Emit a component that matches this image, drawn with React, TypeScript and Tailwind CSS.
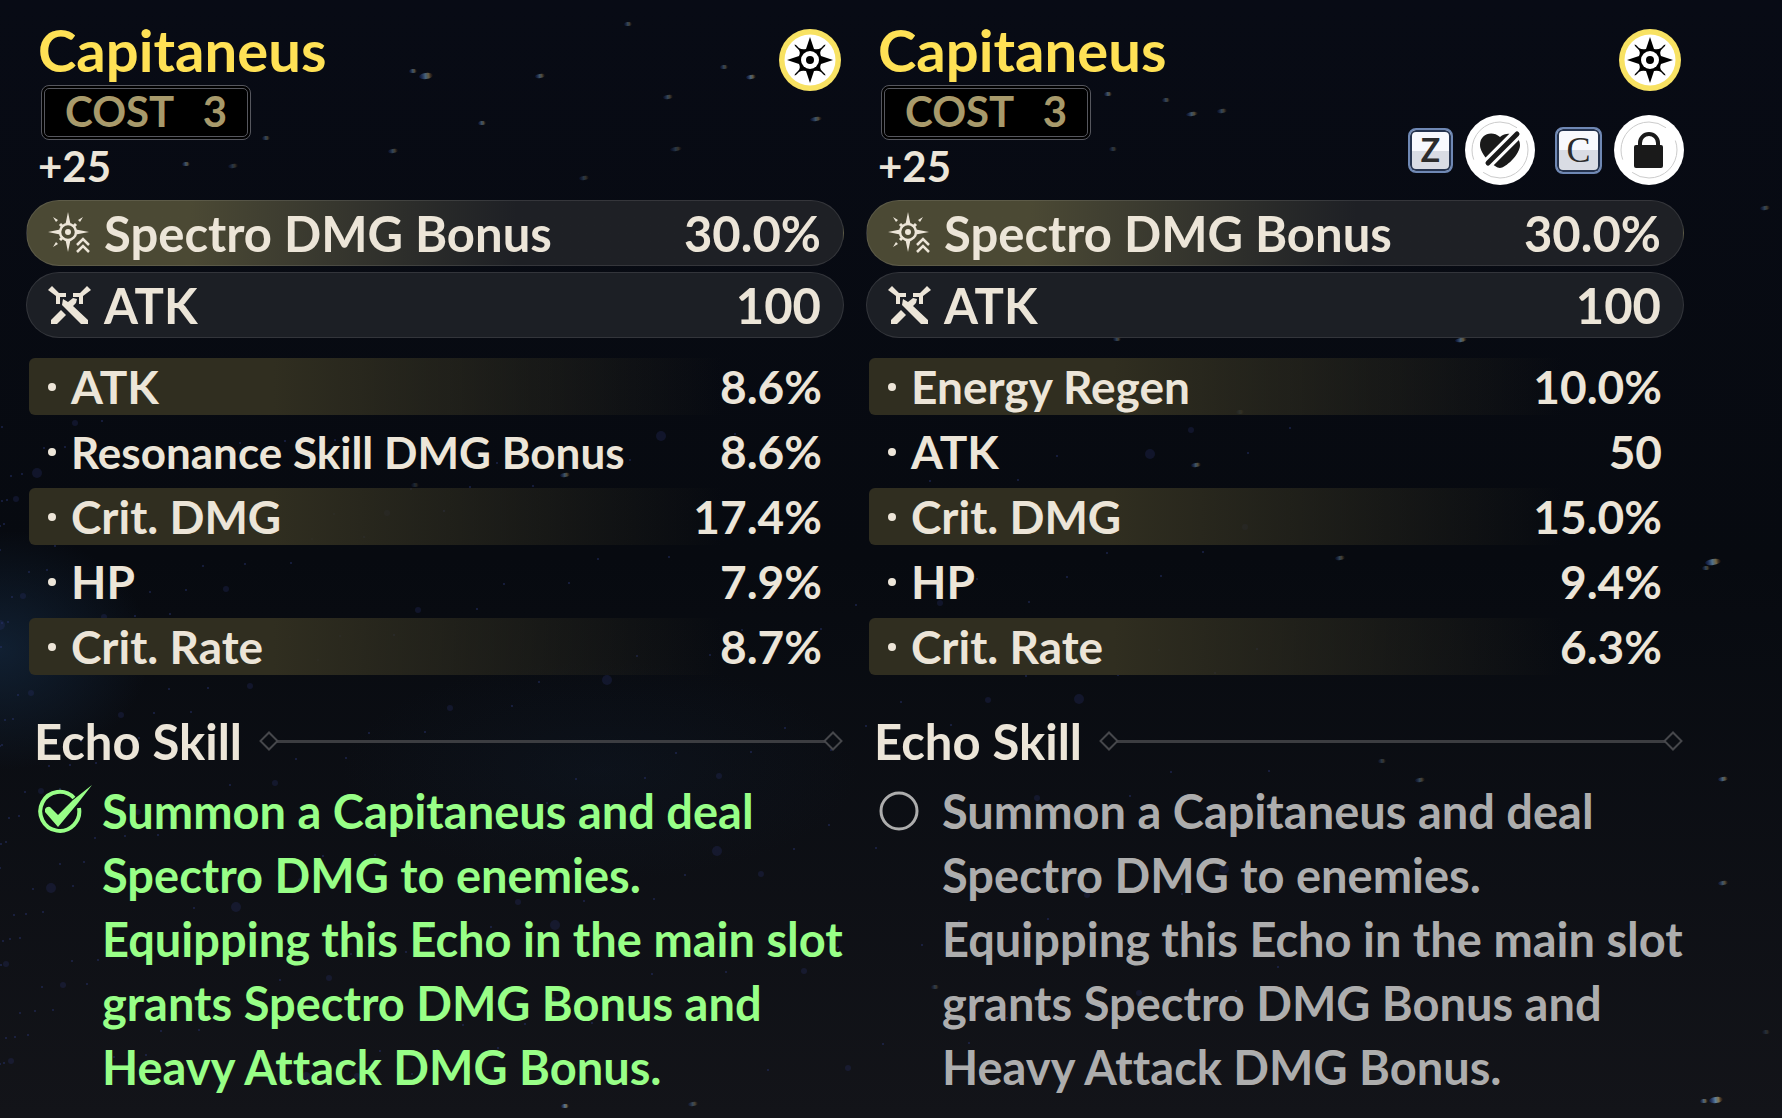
import { Fragment } from 'react';
import clsx from 'clsx';

type Stat = {
  label: string;
  value: string;
  compact?: boolean;
};

type Echo = {
  id: string;
  name: string;
  cost: number;
  level: string;
  subStats: Stat[];
  active: boolean;
  showActions: boolean;
};

const echoes: Echo[] = [
  {
    id: 'equipped',
    name: 'Capitaneus',
    cost: 3,
    level: '+25',
    subStats: [
      { label: 'ATK', value: '8.6%' },
      { label: 'Resonance Skill DMG Bonus', value: '8.6%', compact: true },
      { label: 'Crit. DMG', value: '17.4%' },
      { label: 'HP', value: '7.9%' },
      { label: 'Crit. Rate', value: '8.7%' },
    ],
    active: true,
    showActions: false,
  },
  {
    id: 'candidate',
    name: 'Capitaneus',
    cost: 3,
    level: '+25',
    subStats: [
      { label: 'Energy Regen', value: '10.0%' },
      { label: 'ATK', value: '50' },
      { label: 'Crit. DMG', value: '15.0%' },
      { label: 'HP', value: '9.4%' },
      { label: 'Crit. Rate', value: '6.3%' },
    ],
    active: false,
    showActions: true,
  },
];

const skillText = [
  'Summon a Capitaneus and deal Spectro DMG to enemies.',
  'Equipping this Echo in the main slot grants Spectro DMG Bonus and Heavy Attack DMG Bonus.',
];

// Bright streaks: x, y, half width, opacity
const streaks = [
  [413, 71, 4, 0.5], [426, 76, 7, 0.6], [540, 76, 5, 0.5], [628, 24, 4, 0.4], [668, 97, 5, 0.4],
  [751, 77, 5, 0.6], [724, 67, 4, 0.4], [816, 119, 6, 0.5], [482, 123, 4, 0.5], [676, 149, 6, 0.3],
  [584, 178, 5, 0.3], [266, 138, 4, 0.4], [186, 164, 4, 0.5], [233, 166, 5, 0.3], [393, 151, 5, 0.4],
  [448, 220, 5, 0.5], [653, 211, 5, 0.5], [298, 290, 4, 0.25], [317, 302, 4, 0.4], [1108, 94, 4, 0.5],
  [1166, 100, 4, 0.4], [1192, 114, 6, 0.5], [1222, 111, 5, 0.4], [1113, 149, 4, 0.3], [1084, 129, 4, 0.3],
  [1648, 275, 6, 0.4], [1385, 288, 6, 0.5], [1508, 305, 4, 0.4], [1461, 340, 6, 0.6], [1765, 208, 5, 0.4],
  [1595, 211, 5, 0.3], [1258, 306, 4, 0.3], [1117, 339, 4, 0.4], [565, 475, 5, 0.5], [415, 485, 4, 0.2],
  [1196, 465, 5, 0.5], [1240, 412, 4, 0.3], [1713, 562, 8, 0.7], [1706, 568, 4, 0.4], [1340, 558, 5, 0.4],
  [1723, 779, 5, 0.6], [1723, 883, 5, 0.5], [1382, 761, 4, 0.3], [1420, 780, 5, 0.4], [1716, 1100, 7, 0.8],
  [1704, 1101, 4, 0.6], [565, 1106, 4, 0.7], [693, 1104, 5, 0.4], [1766, 1032, 4, 0.2], [935, 987, 4, 0.3],
];

// Faint dust gathered around the lower left of the sky
const dust = Array.from({ length: 260 }, (_, i) => {
  const a = (i * 0.61803) % 1;
  const b = (i * 0.75488 + 0.31) % 1;
  return {
    x: Math.round(a * a * 1300),
    y: Math.round(420 + b * 660),
    r: i % 19 === 0 ? 5 : i % 7 === 0 ? 3 : 1,
  };
});

const Sky = () => (
  <svg className="absolute inset-0 h-full w-full" viewBox="0 0 1782 1118" preserveAspectRatio="xMidYMid slice" aria-hidden="true">
    <defs>
      <linearGradient id="streak" x1="0" x2="1" y1="0" y2="0">
        <stop offset="0" stopColor="#16309a" stopOpacity="0.4" />
        <stop offset="0.45" stopColor="#6d9cc0" />
        <stop offset="0.7" stopColor="#a08a55" />
        <stop offset="1" stopColor="#5a2a10" stopOpacity="0.2" />
      </linearGradient>
      <radialGradient id="haze">
        <stop offset="0" stopColor="#14283f" stopOpacity="0.7" />
        <stop offset="1" stopColor="#14283f" stopOpacity="0" />
      </radialGradient>
    </defs>
    <ellipse cx="0" cy="650" rx="150" ry="120" fill="url(#haze)" />
    <ellipse cx="600" cy="770" rx="260" ry="110" fill="url(#haze)" opacity="0.25" />
    {dust.map((d, i) => (
      <circle key={i} cx={d.x} cy={d.y} r={d.r} fill="#2a3470" opacity={d.r > 1 ? 0.28 : 0.6} />
    ))}
    {streaks.map(([x, y, w, o], i) => (
      <ellipse key={i} cx={x} cy={y} rx={w} ry={w > 6 ? 3 : 2} fill="url(#streak)" opacity={o} transform={`rotate(-8 ${x} ${y})`} />
    ))}
  </svg>
);

const SpectroEmblem = () => (
  <svg className="h-[62px] w-[62px]" viewBox="0 0 62 62" role="img" aria-label="Spectro">
    <circle cx="31" cy="31" r="31" fill="#f8e262" />
    <circle cx="31" cy="31" r="25.5" fill="#fff" />
    <path
      fill="#000"
      d="M31 8 L35 20 Q39 21 42 19 L45 16 L46.500 15.500 L46 17 L43 20 Q40 23 42 27 L54 31 L42 35 Q40 39 43 42 L46 45 L46.500 46.500 L45 46 L42 43 Q39 41 35 42 L31 54 L27 42 Q23 41 20 43 L17 46 L15.500 46.500 L16 45 L19 42 Q22 39 20 35 L8 31 L20 27 Q22 23 19 20 L16 17 L15.500 15.500 L17 16 L20 19 Q23 21 27 20 Z"
    />
    <circle cx="31" cy="31" r="9" fill="#fff" />
    <circle cx="31" cy="31" r="4" fill="#000" />
  </svg>
);

const SpectroBonusIcon = () => (
  <svg className="h-11 w-11 shrink-0" viewBox="0 0 44 44" aria-hidden="true">
    <g fill="#ece5d8">
      <path d="M20 1 L22.500 13 L17.500 13 Z M20 41 L22.500 29 L17.500 29 Z M0 21 L12 18.500 L12 23.500 Z M41 21 L28 18.500 L28 23.500 Z" />
      <path d="M5 6 L10 9 L8 11 Z M35 6 L30 9 L32 11 Z M5 36 L10 33 L8 31 Z" />
      <circle cx="20" cy="21" r="3" />
    </g>
    <circle cx="20" cy="21" r="8" fill="none" stroke="#ece5d8" strokeWidth="2.500" />
    <path d="M12 13 L15 16 M28 13 L25 16 M12 29 L15 26" stroke="#ece5d8" strokeWidth="3" />
    <path d="M29 34 L35 28 L41 34 M29 41 L35 35 L41 41" fill="none" stroke="#4b4934" strokeWidth="5" />
    <path d="M29 34 L35 28 L41 34 M29 41 L35 35 L41 41" fill="none" stroke="#ece5d8" strokeWidth="2.500" />
  </svg>
);

const SwordsIcon = () => (
  <svg className="h-11 w-11 shrink-0" viewBox="0 0 44 44" aria-hidden="true">
    <g fill="#ece5d8">
      <path d="M4 3 L11 10 L18 10 L18 14 L12 14 L12 21 L8 21 L8 13 L0 7 Z" />
      <path d="M39 3 L32 10 L25 10 L25 14 L31 14 L31 21 L35 21 L35 13 L43 7 Z" />
      <path d="M15 16 L20 19 L25 15 L29 16 L28 20 L25 23 L40 37 L40 41 L33 41 L14 22 Z" />
      <path d="M13 27 L18 32 L9 41 L3 41 L3 37 Z" />
    </g>
  </svg>
);

const HeartSlashIcon = () => (
  <svg className="h-[70px] w-[70px]" viewBox="0 0 70 70" aria-hidden="true">
    <circle cx="35" cy="35" r="28" fill="none" stroke="#ccc" strokeWidth="1" strokeDasharray="72 16" strokeDashoffset="10" />
    <path
      d="M35 53 C30 53 15 40 15 30 C15 19 27 15 35 22 C43 15 55 20 55 30 C55 40 40 53 35 53 Z"
      fill="#1a1a1a"
    />
    <path d="M22 49 L52 19" stroke="#fff" strokeWidth="11" strokeLinecap="round" />
    <path d="M23 48 L52 19" stroke="#1a1a1a" strokeWidth="5" strokeLinecap="round" />
  </svg>
);

const LockIcon = () => (
  <svg className="h-[70px] w-[70px]" viewBox="0 0 70 70" aria-hidden="true">
    <circle cx="35" cy="35" r="28" fill="none" stroke="#ccc" strokeWidth="1" strokeDasharray="72 16" strokeDashoffset="10" />
    <path d="M26 31 V28 A9 9 0 0 1 44 28 V31" fill="none" stroke="#1a1a1a" strokeWidth="4" />
    <rect x="20" y="30" width="29" height="23" rx="2" fill="#1a1a1a" />
  </svg>
);

const KeyCap = ({ children, className }: { children: string; className: string }) => (
  <kbd
    className={clsx(
      'flex items-center justify-center rounded-lg border-2 border-[#6f88b4] bg-linear-to-b from-[#f8f9fd] from-50% to-[#d9dce4] to-50% leading-none text-[#2c2c2c] ring-2 ring-[#26344f] ring-inset',
      className,
    )}
  >
    {children}
  </kbd>
);

const Actions = () => (
  <div className="flex items-center gap-5">
    <button type="button" aria-label="Discard mark" className="flex cursor-pointer items-center gap-3">
      <KeyCap className="h-[45px] w-[45px] font-['Lato'] text-[32px] font-bold">Z</KeyCap>
      <span className="rounded-full bg-white">
        <HeartSlashIcon />
      </span>
    </button>
    <button type="button" aria-label="Lock" className="flex cursor-pointer items-center gap-3">
      <KeyCap className="h-[47px] w-[47px] font-['Liberation_Serif'] text-[36px] font-normal">C</KeyCap>
      <span className="rounded-full bg-white">
        <LockIcon />
      </span>
    </button>
  </div>
);

const Divider = () => (
  <div className="flex grow items-center" aria-hidden="true">
    <span className="m-1 h-[14px] w-[14px] rotate-45 border-2 border-[#46474b]" />
    <span className="-mx-1 h-[3px] grow bg-[#3c3d41]" />
    <span className="m-1 h-[14px] w-[14px] rotate-45 border-2 border-[#46474b]" />
  </div>
);

const SkillMark = ({ active }: { active: boolean }) =>
  active ? (
    <svg className="h-[52px] w-[56px]" viewBox="0 0 56 52" aria-hidden="true">
      <path d="M36 13 A19.500 19.500 0 1 0 41 23" fill="none" stroke="#98ff87" strokeWidth="4" />
      <path d="M7 24 Q9 21 12 22 L20 30 L35 15 L54 0 L40 18 L20 42 L7 27 Z" fill="#98ff87" />
    </svg>
  ) : (
    <svg className="h-[52px] w-[56px]" viewBox="0 0 56 52" aria-hidden="true">
      <circle cx="21" cy="26" r="18" fill="none" stroke="#adadad" strokeWidth="3" />
    </svg>
  );

const EchoCard = ({ echo }: { echo: Echo }) => (
  <article>
    <header className="flex justify-between pt-5">
      <div className="pl-3">
        <h2 className="text-[58px] leading-[60px] font-bold text-[#ffe155]">{echo.name}</h2>
        <div className="mt-[5px] ml-[3px] flex h-[55px] w-[210px] items-center justify-between rounded-lg border-4 border-double border-[#56575e] bg-black pr-[20px] pb-1 pl-5 text-[42px] leading-none font-bold text-[#a89a6b]">
          <span>COST</span>
          <span>{echo.cost}</span>
        </div>
        <p className="text-[42px] leading-[52px] font-bold">{echo.level}</p>
      </div>
      <div className="flex flex-col items-end gap-6 pt-[9px]">
        <div className="mr-[3px]">
          <SpectroEmblem />
        </div>
        {echo.showActions && <Actions />}
      </div>
    </header>

    <dl className="mt-[8px] flex flex-col gap-[6px] text-[49px] leading-none font-bold">
      <div className="flex h-[66px] items-center rounded-full border border-white/10 bg-linear-to-r from-[#4b4934] from-20% to-[#1e2025] to-60% pr-[22px] pl-[21px]">
        <SpectroBonusIcon />
        <dt className="ml-3">Spectro DMG Bonus</dt>
        <dd className="ml-auto">30.0%</dd>
      </div>
      <div className="flex h-[66px] items-center rounded-full border border-white/10 bg-[#1c1f25] pr-[22px] pl-[21px]">
        <SwordsIcon />
        <dt className="ml-3">ATK</dt>
        <dd className="ml-auto">100</dd>
      </div>
    </dl>

    <dl className="mt-[20px] ml-[3px] flex flex-col gap-2 text-[46px] leading-none font-bold">
      {echo.subStats.map((stat, i) => (
        <div
          key={stat.label}
          className={clsx(
            'flex h-[57px] items-center rounded-md pr-[22px] pl-[19px]',
            i % 2 === 0 && 'bg-linear-to-r from-[#302e20] from-30% to-transparent to-85%',
          )}
        >
          <span className="mr-[15px] h-2 w-2 rounded-full bg-[#ece5d8]" />
          <dt className={clsx(stat.compact && 'text-[44px]')}>{stat.label}</dt>
          <dd className="ml-auto">{stat.value}</dd>
        </div>
      ))}
    </dl>

    <section className="mt-[42px]">
      <div className="flex items-center gap-4 pl-[8px]">
        <h3 className="text-[49px] leading-[48px] font-bold">Echo Skill</h3>
        <Divider />
      </div>
      <label className={clsx('mt-[14px] flex', echo.active ? 'text-[#98ff87]' : 'text-[#adadad]')}>
        <span className="ml-3 shrink-0 pt-[6px]">
          <input type="checkbox" className="sr-only" checked={echo.active} readOnly />
          <SkillMark active={echo.active} />
        </span>
        <span className="-mr-4 ml-2 text-[47px] leading-[64px] font-bold [font-variant-ligatures:none]">
          {skillText.map((text, i) => (
            <Fragment key={i}>
              {i > 0 && <br />}
              {text}
            </Fragment>
          ))}
        </span>
      </label>
    </section>
  </article>
);

const App = () => (
  <main className="relative min-h-screen overflow-hidden bg-linear-to-b from-[#080b15] via-[#070a10] to-[#131419] font-['Lato',sans-serif] text-[#ece5d8]">
    <Sky />
    <div className="relative grid grid-cols-2 gap-[22px] pr-[98px] pl-[26px]">
      {echoes.map((echo) => (
        <EchoCard key={echo.id} echo={echo} />
      ))}
    </div>
  </main>
);

export default App;
